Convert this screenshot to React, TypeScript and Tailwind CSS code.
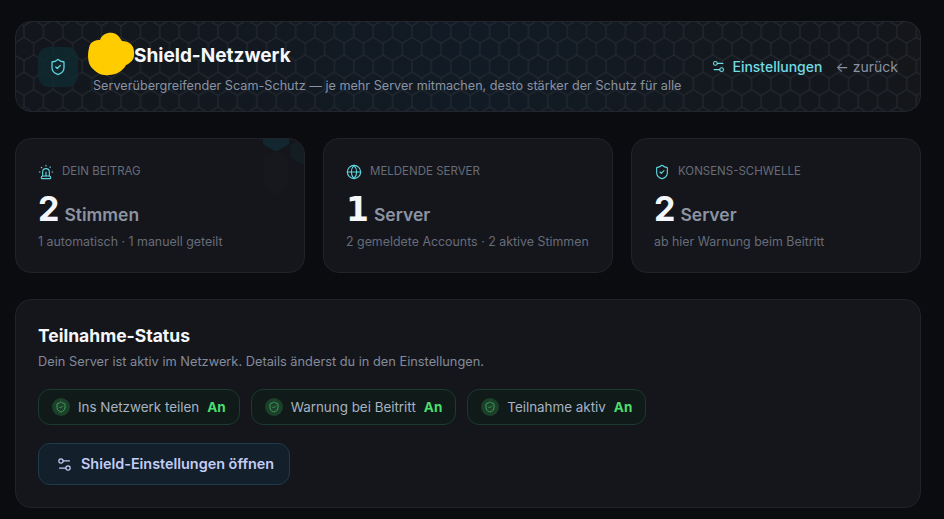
import React from 'react'
import { Globe, ShieldCheck, Settings2, Siren } from 'lucide-react'

const inter = 'font-["Inter",sans-serif]'

function HexPattern() {
  return (
    <svg className="absolute inset-0 h-full w-full" aria-hidden="true">
      <defs>
        <pattern id="hex" width="19.4" height="34.8" patternUnits="userSpaceOnUse" x="8" y="-2">
          <path
            d="M9.7 0 L19.4 5.8 L19.4 17.4 L9.7 23.2 L0 17.4 L0 5.8 Z M9.7 23.2 L9.7 34.8"
            fill="none"
            stroke="#272b32"
            strokeWidth="1"
          />
        </pattern>
      </defs>
      <rect width="100%" height="100%" fill="url(#hex)" />
    </svg>
  )
}

function Blob() {
  return (
    <svg className="absolute left-[71px] top-[10px] h-[44px] w-[48px]" viewBox="0 0 48 44" aria-hidden="true">
      <path
        d="M2 16 C3 9 9 8 13 8 C15 2 21 0 26 1 C31 2 33 6 35 9 C42 9 47 13 47 20 C48 27 44 31 39 33 C36 39 29 43 22 43 C15 44 10 41 6 37 C1 33 0 24 2 16 Z"
        fill="#ffcc00"
      />
    </svg>
  )
}

function StatCard({ icon, label, value, unit, hint, glow, valueClass }: { icon: React.ReactNode; label: string; value: string; unit: string; hint: string; glow?: boolean; valueClass: string }) {
  return (
    <div className="relative h-[135px] overflow-hidden rounded-[16px] border border-[#212329] bg-[#15161b] px-[22px] pt-[25px]">
      {glow && (
        <svg className="absolute right-0 top-0 h-[60px] w-[42px]" viewBox="0 0 42 60" aria-hidden="true">
          <path d="M1 0 L27 0 L27 5 L14 13 L1 5 Z" fill="#12272f" />
          <path d="M28 6 L40 0 L42 0 L42 26 L28 18 Z" fill="#151d24" />
          <path d="M2 18 L14 12 L26 20 L26 48 L14 56 L2 48 Z" fill="#16181e" />
        </svg>
      )}
      <div className="relative flex h-[16px] items-center gap-[8px]">
        <span className="text-[#5fd6df]">{icon}</span>
        <span className="text-[11.5px] text-[#666c7a]">{label}</span>
      </div>
      <div className="relative mt-[9px] flex h-[40px] items-baseline gap-[6px]">
        <span className={`font-bold text-[#f4f6fa] ${valueClass}`}>{value}</span>
        <span className="text-[17.5px] font-semibold text-[#8c94a3]">{unit}</span>
      </div>
      <p className="relative mt-[4px] text-[12.4px] leading-[18px] text-[#666c7a]">{hint}</p>
    </div>
  )
}

function StatusPill({ label }: { label: string }) {
  return (
    <div className="flex h-[36px] items-center gap-[8px] rounded-[12px] border border-[#1b3a30] bg-[#0f1a19] px-[13px]">
      <span className="flex h-[18px] w-[18px] items-center justify-center rounded-full bg-[#1c4029] text-[#3f9e5d]">
        <ShieldCheck size={12} strokeWidth={2} />
      </span>
      <span className="text-[13.4px] text-[#a9b2c2]">{label}</span>
      <span className="text-[13.5px] font-bold text-[#4ade6e]">An</span>
    </div>
  )
}

export default function App() {
  return (
    <div className={`h-[519px] w-[944px] overflow-hidden bg-[#0b0c10] pl-[15px] pr-[23px] pt-[21px] ${inter}`}>
      <header className="relative flex h-[91px] items-center justify-between overflow-hidden rounded-[16px] border border-[#22262c] bg-gradient-to-r from-[#13161c] via-[#111b25] to-[#14161a] px-[22px]">
        <HexPattern />
        <div className="relative flex items-center gap-[15px]">
          <div className="flex h-[40px] w-[40px] items-center justify-center rounded-[11px] bg-[#0f2a31]/80 text-[#5fd6df]">
            <ShieldCheck size={18} strokeWidth={1.7} />
          </div>
          <div className="pt-[5px]">
            <h1 className="pl-[41px] text-[19px] font-bold leading-[26px] text-[#f7f8fb]">Shield-Netzwerk</h1>
            <p className="mt-[8px] text-[12.65px] leading-[18px] text-[#8a92a3]">
              Serverübergreifender Scam-Schutz — je mehr Server mitmachen, desto stärker der Schutz für alle
            </p>
          </div>
        </div>
        <Blob />
        <div className="relative flex items-center">
          <Settings2 size={15} strokeWidth={1.7} className="mr-[6px] text-[#72dbe3]" />
          <span className="mr-[13px] text-[14px] font-medium text-[#72dbe3]">Einstellungen</span>
          <span className="text-[14px] text-[#8a92a3]">← zurück</span>
        </div>
      </header>

      <div className="mt-[26px] grid grid-cols-3 gap-[18px]">
        <StatCard glow valueClass="text-[34px] leading-[40px] tracking-[-0.03em]" icon={<Siren size={16} strokeWidth={1.7} />} label="DEIN BEITRAG" value="2" unit="Stimmen" hint="1 automatisch · 1 manuell geteilt" />
        <StatCard valueClass={'text-[33px] leading-[42px] tracking-[-0.03em] font-["DejaVu_Sans",sans-serif]'} icon={<Globe size={16} strokeWidth={1.7} />} label="MELDENDE SERVER" value="1" unit="Server" hint="2 gemeldete Accounts · 2 aktive Stimmen" />
        <StatCard valueClass="text-[34px] leading-[40px] tracking-[-0.03em]" icon={<ShieldCheck size={16} strokeWidth={1.7} />} label="KONSENS-SCHWELLE" value="2" unit="Server" hint="ab hier Warnung beim Beitritt" />
      </div>

      <section className="mt-[26px] h-[209px] rounded-[16px] border border-[#212329] bg-[#15161b] px-[22px] pt-[24px]">
        <h2 className="text-[17.5px] font-bold leading-[24px] text-[#f4f6fa]">Teilnahme-Status</h2>
        <p className="mt-[5px] text-[12.8px] leading-[18px] text-[#838b9b]">
          Dein Server ist aktiv im Netzwerk. Details änderst du in den Einstellungen.
        </p>
        <div className="mt-[18px] flex gap-[11px]">
          <StatusPill label="Ins Netzwerk teilen" />
          <StatusPill label="Warnung bei Beitritt" />
          <StatusPill label="Teilnahme aktiv" />
        </div>
        <button className="mt-[18px] flex h-[42px] items-center gap-[8px] rounded-[12px] border border-[#1d3b4a] bg-[#13202c] pl-[17px] pr-[15px] text-[14.4px] font-semibold text-[#c3cdf5]">
          <Settings2 size={17} strokeWidth={1.7} className="text-[#c3cdf5]" />
          Shield-Einstellungen öffnen
        </button>
      </section>
    </div>
  )
}
